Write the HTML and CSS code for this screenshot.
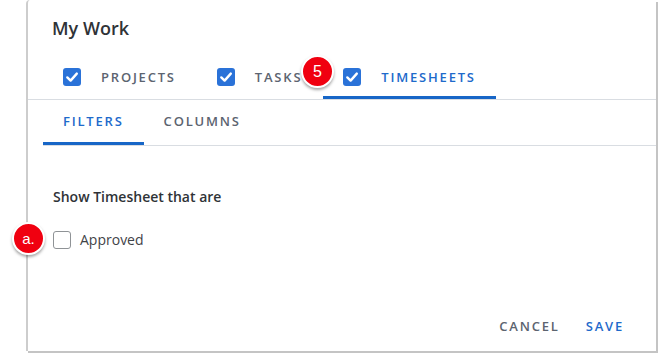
FILE: index.html
```html
<!DOCTYPE html>
<html>
<head>
<meta charset="utf-8">
<link rel="stylesheet" href="styles.css">
</head>
<body>
<div class="dialog">
  <div class="header">
    <h1 class="title">My Work</h1>
    <div class="tabs">
      <div class="tab">
        <span class="cb checked"><svg viewBox="0 0 18 18" width="18" height="18"><path d="M4.3 9.4 L7.6 12.6 L13.8 5.6" fill="none" stroke="#fff" stroke-width="2.4" stroke-linecap="round" stroke-linejoin="round"/></svg></span>
        <span class="tab-label">Projects</span>
      </div>
      <div class="tab">
        <span class="cb checked"><svg viewBox="0 0 18 18" width="18" height="18"><path d="M4.3 9.4 L7.6 12.6 L13.8 5.6" fill="none" stroke="#fff" stroke-width="2.4" stroke-linecap="round" stroke-linejoin="round"/></svg></span>
        <span class="tab-label">Tasks</span>
      </div>
      <div class="tab active">
        <span class="cb checked"><svg viewBox="0 0 18 18" width="18" height="18"><path d="M4.3 9.4 L7.6 12.6 L13.8 5.6" fill="none" stroke="#fff" stroke-width="2.4" stroke-linecap="round" stroke-linejoin="round"/></svg></span>
        <span class="tab-label">Timesheets</span>
      </div>
    </div>
  </div>
  <div class="subtabs">
    <div class="subtab active">Filters</div>
    <div class="subtab">Columns</div>
  </div>
  <div class="content">
    <div class="section-label">Show Timesheet that are</div>
    <label class="option">
      <span class="cb empty"></span>
      <span class="option-label">Approved</span>
    </label>
  </div>
  <div class="footer">
    <span class="btn cancel">Cancel</span>
    <span class="btn save">Save</span>
  </div>
</div>
<div class="badge badge-5">5</div>
<div class="badge badge-a">a.</div>
</body>
</html>
```

FILE: styles.css
```css
html, body {
  margin: 0;
  padding: 0;
  background: #fff;
  overflow: hidden;
}
body {
  width: 659px;
  height: 354px;
  font-family: "Open Sans", "Noto Sans", sans-serif;
  position: relative;
}
.dialog {
  margin-left: 26px;
  width: 630px;
  height: 351px;
  box-sizing: border-box;
  border-left: 2px solid #cdcdcd;
  border-top-left-radius: 4px;
  box-shadow: 2px 2px 0 #c4c4c4;
  display: flex;
  flex-direction: column;
  background: #fff;
}
.header {
  border-bottom: 1px solid #d9dde2;
  padding-top: 16px;
}
.title {
  margin: 0 0 0 24px;
  font-size: 18px;
  line-height: 24px;
  font-weight: 600;
  color: #2f3337;
}
.tabs {
  display: flex;
  margin: 17px 0 0 15px;
}
.tab {
  display: flex;
  align-items: center;
  gap: 20px;
  height: 39px;
  padding: 0 20px;
  border-bottom: 3px solid transparent;
  margin-right: 1px;
}
.tab.active {
  border-bottom-color: #1766c7;
}
.cb {
  width: 18px;
  height: 18px;
  box-sizing: border-box;
  border-radius: 3px;
  display: inline-block;
  flex: none;
}
.cb svg { display: block; }
.cb.checked {
  background: #2a72d8;
}
.cb.empty {
  border: 1.5px solid #8f9396;
  background: #fff;
}
.tab-label, .subtab, .btn {
  text-transform: uppercase;
  font-size: 13px;
  font-weight: 600;
  letter-spacing: 1.8px;
  color: #5c6470;
}
.tab.active .tab-label, .subtab.active, .btn.save {
  color: #1e6acb;
}
.subtabs {
  display: flex;
  margin-left: 15px;
  border-bottom: 1px solid #d9dde2;
}
.subtab {
  height: 42px;
  line-height: 42px;
  padding: 0 20px;
  border-bottom: 3px solid transparent;
}
.subtab.active {
  border-bottom-color: #1766c7;
}
.content {
  flex: 1;
  padding: 41px 0 0 25px;
}
.section-label {
  font-size: 14px;
  line-height: 20px;
  font-weight: 600;
  color: #2f3337;
}
.option {
  display: flex;
  align-items: center;
  gap: 9px;
  margin-top: 24px;
}
.option-label {
  font-size: 14px;
  line-height: 18px;
  color: #3f4347;
}
.footer {
  height: 50px;
  display: flex;
  align-items: center;
  justify-content: flex-end;
  gap: 26px;
  padding-right: 32px;
}
.badge {
  position: absolute;
  width: 29px;
  height: 29px;
  border-radius: 50%;
  background: #f00010;
  border: 2px solid #fff;
  box-shadow: 0 2px 3px rgba(0,0,0,0.35);
  color: #fff;
  font-family: "Liberation Sans", Arial, sans-serif;
  font-size: 16px;
  line-height: 29px;
  text-align: center;
}
.badge-5 {
  left: 301px;
  top: 55px;
}
.badge-a {
  left: 12px;
  top: 222px;
  font-size: 15px;
}
```
